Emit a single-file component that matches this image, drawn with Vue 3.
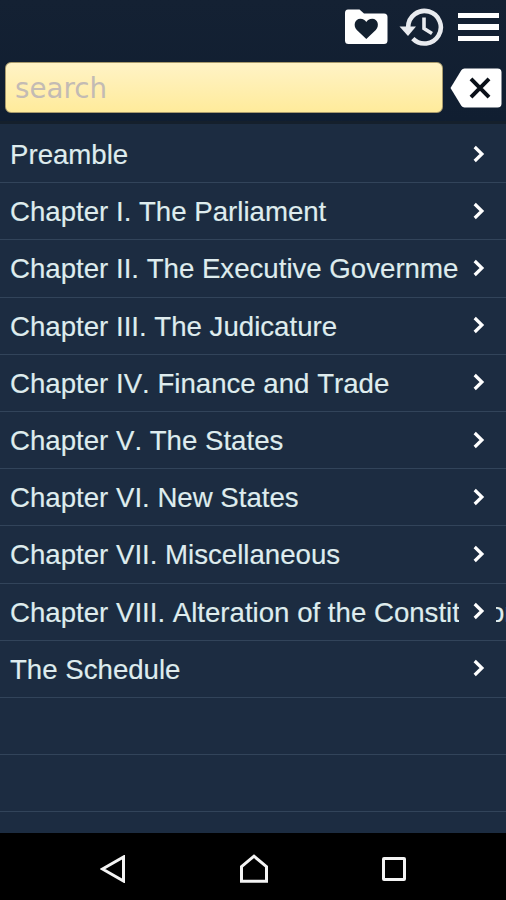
<script setup>
import { ref } from 'vue'

const query = ref('')

const chapters = [
  'Preamble',
  'Chapter I. The Parliament',
  'Chapter II. The Executive Government',
  'Chapter III. The Judicature',
  'Chapter IV. Finance and Trade',
  'Chapter V. The States',
  'Chapter VI. New States',
  'Chapter VII. Miscellaneous',
  'Chapter VIII. Alteration of the Constitution',
  'The Schedule'
]

const emptyRows = 3
</script>

<template>
  <div class="screen">
    <header class="header">
      <div class="toolbar">
        <button type="button" class="icon-button" aria-label="Favorites">
          <svg width="44" height="36" viewBox="0 0 44 36">
            <path
              fill="#fff"
              d="M4 0.5H15.5L20 4.5H40Q43.5 4.5 43.5 8V31.5Q43.5 35 40 35H4.5Q1 35 1 31.5V4Q1 0.5 4 0.5Z"
            />
            <path
              fill="#13202f"
              d="M22.3 30L12.8 21C8.8 16.8 10.8 9.8 16.3 9.8C19.3 9.8 21.2 11.3 22.3 13C23.4 11.3 25.3 9.8 28.3 9.8C33.8 9.8 35.8 16.8 31.8 21Z"
            />
          </svg>
        </button>
        <button type="button" class="icon-button" aria-label="History">
          <svg width="46" height="42" viewBox="0 0 46 42">
            <path class="history-ring" d="M9.2 21A16.3 16.3 0 1 1 13.8 32.6" />
            <path fill="#e9ebef" d="M0.5 20.5H17L9 30Z" />
            <path class="history-hands" d="M25 11.5V22.5L33 27.5" />
          </svg>
        </button>
        <button type="button" class="icon-button menu" aria-label="Menu">
          <span />
          <span />
          <span />
        </button>
      </div>

      <div class="search-row">
        <input v-model="query" class="search-input" type="text" placeholder="search" />
        <button type="button" class="icon-button" aria-label="Clear" @click="query = ''">
          <svg width="52" height="40" viewBox="0 0 52 40">
            <path
              fill="#fff"
              d="M14.5 0.5H47.5Q51.5 0.5 51.5 4.5V35.5Q51.5 39.5 47.5 39.5H14.5Q12.5 39.5 11.3 37.8L0.5 20L11.3 2.2Q12.5 0.5 14.5 0.5Z"
            />
            <path fill="none" stroke="#0a1018" stroke-width="4" d="M21 10.8L39 29.2M39 10.8L21 29.2" />
          </svg>
        </button>
      </div>
    </header>

    <ul class="list">
      <li v-for="chapter in chapters" :key="chapter" class="row">
        <span class="label">{{ chapter }}</span>
        <span class="chevron">
          <svg width="14" height="18" viewBox="0 0 14 18">
            <path fill="none" stroke="#fff" stroke-width="3.2" d="M2.7 2L9.9 9L2.7 16" />
          </svg>
        </span>
      </li>
      <li v-for="n in emptyRows" :key="n" class="row" />
    </ul>

    <nav class="system-bar">
      <svg width="26" height="28" viewBox="0 0 26 28">
        <path class="system-icon" d="M23.5 2V26L2.5 14Z" />
      </svg>
      <svg width="30" height="30" viewBox="0 0 30 30">
        <path class="system-icon" d="M2.5 12.7L15 2.2L27.5 12.7V27.3H2.5Z" />
      </svg>
      <svg width="26" height="26" viewBox="0 0 26 26">
        <rect class="system-icon" x="2.5" y="2.5" width="21" height="21" rx="0.5" />
      </svg>
    </nav>
  </div>
</template>

<style>
body {
  margin: 0;
  background: #000;
}
</style>

<style scoped>
.screen {
  display: flex;
  flex-direction: column;
  height: 900px;
  width: 506px;
  overflow: hidden;
  background: #1c2c41;
  font-family: "Liberation Sans", Arial, sans-serif;
}

.header {
  flex: none;
  box-sizing: border-box;
  height: 124px;
  background: linear-gradient(#142133, #101e31);
  border-bottom: 3px solid #15202c;
}

.toolbar {
  display: flex;
  justify-content: flex-end;
  align-items: center;
  box-sizing: border-box;
  height: 62px;
  padding: 0 7px 8px 0;
}

.icon-button {
  display: block;
  flex: none;
  padding: 0;
  border: none;
  background: none;
  cursor: pointer;
}

.icon-button svg {
  display: block;
}

.toolbar .icon-button + .icon-button {
  margin-left: 11px;
}

.toolbar .icon-button.menu {
  display: flex;
  flex-direction: column;
  gap: 6px;
  margin-left: 13px;
}

.menu span {
  width: 41px;
  height: 5.5px;
  background: #fff;
}

.history-ring,
.history-hands {
  fill: none;
  stroke: #e9ebef;
  stroke-width: 4.6;
}

.history-hands {
  stroke-width: 3.6;
}

.search-row {
  display: flex;
  align-items: center;
  gap: 7px;
  padding: 0 4px 0 5px;
}

.search-input {
  flex: 1;
  min-width: 0;
  box-sizing: border-box;
  height: 51px;
  padding: 1px 9px 0;
  border: 1px solid #a89a6c;
  border-radius: 6px;
  outline: none;
  background: linear-gradient(#fff3c6, #ffeb9b);
  font-family: "DejaVu Sans", Verdana, sans-serif;
  font-size: 27.7px;
  color: #333;
}

.search-input::placeholder {
  color: #c3bbb4;
  opacity: 1;
}

.list {
  flex: 1;
  min-height: 0;
  margin: 0;
  padding: 2px 0 0;
  overflow: hidden;
  list-style: none;
}

.row {
  display: flex;
  align-items: center;
  box-sizing: border-box;
  height: 57.2px;
  padding: 0 10px;
  border-bottom: 1.6px solid #32445a;
  color: #dfecee;
}

/* long labels run on underneath the chevron cell */
.label {
  flex: 1;
  min-width: 0;
  padding-top: 2px;
  font-size: 27.63px;
  font-kerning: none;
  line-height: 36px;
  white-space: nowrap;
  -webkit-text-stroke: 0.15px #dfecee;
}

.chevron {
  position: relative;
  display: flex;
  align-items: center;
  box-sizing: border-box;
  width: 37px;
  height: 100%;
  padding: 0 0 1px 13px;
  background: #1c2c41;
}

.system-bar {
  display: flex;
  align-items: center;
  justify-content: space-between;
  flex: none;
  box-sizing: border-box;
  height: 67px;
  padding: 4px 99px 0 100px;
  background: #000;
}

.system-icon {
  fill: none;
  stroke: #f4f4f4;
  stroke-width: 3;
}
</style>
